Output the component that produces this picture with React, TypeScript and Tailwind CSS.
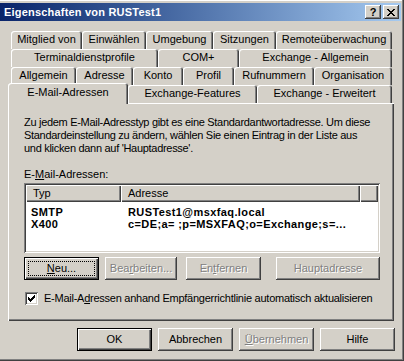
import React from "react";

const raised =
  "shadow-[inset_-1px_-1px_#404040,inset_1px_1px_#ffffff,inset_-2px_-2px_#808080,inset_2px_2px_#d4d0c8]";
const defBtn =
  "shadow-[inset_0_0_0_1px_#000000,inset_2px_2px_#ffffff,inset_-2px_-2px_#404040,inset_-3px_-3px_#808080]";
const disabledText = "text-[#808080] [text-shadow:1px_1px_0_#ffffff]";

function Tab({ label, w }: { label: string; w: string }) {
  return (
    <div
      className={`${w} h-[18px] shrink-0 flex items-center justify-center rounded-t-[3px] bg-[#d4d0c8] shadow-[inset_1px_1px_#ffffff,inset_-1px_0_#404040,inset_-2px_0_#808080] pb-[1px]`}
    >
      {label}
    </div>
  );
}

function Button({
  children,
  w,
  kind = "normal",
}: {
  children: React.ReactNode;
  w: string;
  kind?: "normal" | "default" | "focus" | "disabled";
}) {
  const sh = kind === "default" || kind === "focus" ? defBtn : raised;
  return (
    <div className={`${w} h-[23px] shrink-0 flex bg-[#d4d0c8] ${sh}`}>
      {kind === "focus" ? (
        <div className="flex-1 m-[4px] border border-dotted border-black flex items-center justify-center">
          {children}
        </div>
      ) : (
        <div
          className={`flex-1 flex items-center justify-center ${
            kind === "disabled" ? disabledText : ""
          }`}
        >
          {children}
        </div>
      )}
    </div>
  );
}

export default function App() {
  return (
    <div className="w-[404px] h-[361px] overflow-hidden whitespace-nowrap bg-[#d4d0c8] font-['Liberation_Sans',Arial,sans-serif] text-[11px] leading-[13px] text-black flex flex-col pt-[3px] pr-[3px] shadow-[inset_-1px_-1px_#404040,inset_-2px_-2px_#808080,inset_0_1px_#ffffff]">
      {/* Title bar */}
      <div className="h-[18px] shrink-0 flex items-center pl-[4px] pr-[2px] bg-gradient-to-r from-[#0a246a] to-[#a6caf0]">
        <div className="flex-1 text-white font-bold text-[11px] tracking-[0.2px]">
          Eigenschaften von RUSTest1
        </div>
        <div className={`w-[16px] h-[14px] flex items-center justify-center bg-[#d4d0c8] ${raised} font-bold text-[11px]`}>
          ?
        </div>
        <div className={`ml-[2px] w-[16px] h-[14px] flex items-center justify-center bg-[#d4d0c8] ${raised}`}>
          <svg width="8" height="7" viewBox="0 0 8 7" shapeRendering="crispEdges">
            <path
              d="M0 0h2v1H0zM6 0h2v1H6zM1 1h2v1H1zM5 1h2v1H5zM2 2h4v1H2zM3 3h2v1H3zM2 4h4v1H2zM1 5h2v1H1zM5 5h2v1H5zM0 6h2v1H0zM6 6h2v1H6z"
              fill="#000"
            />
          </svg>
        </div>
      </div>

      {/* Tabs */}
      <div className="mt-[10px] flex flex-col">
        <div className="ml-[11px] flex">
          <Tab label="Mitglied von" w="w-[71px]" />
          <Tab label="Einwählen" w="w-[64px]" />
          <Tab label="Umgebung" w="w-[67px]" />
          <Tab label="Sitzungen" w="w-[63px]" />
          <Tab label="Remoteüberwachung" w="w-[116px]" />
        </div>
        <div className="ml-[11px] flex">
          <Tab label="Terminaldienstprofile" w="w-[147px]" />
          <Tab label="COM+" w="w-[81px]" />
          <Tab label="Exchange - Allgemein" w="w-[153px]" />
        </div>
        <div className="ml-[11px] flex">
          <Tab label="Allgemein" w="w-[65px]" />
          <Tab label="Adresse" w="w-[57px]" />
          <Tab label="Konto" w="w-[50px]" />
          <Tab label="Profil" w="w-[51px]" />
          <Tab label="Rufnummern" w="w-[80px]" />
          <Tab label="Organisation" w="w-[78px]" />
        </div>
        <div className="ml-[8px] -mt-[2px] h-[20px] flex relative z-10">
          <div className="w-[120px] h-[21px] shrink-0 flex justify-center pt-[3px] rounded-t-[3px] bg-[#d4d0c8] shadow-[inset_1px_1px_#ffffff,inset_-1px_0_#404040,inset_-2px_0_#808080]">
            E-Mail-Adressen
          </div>
          <div className="mt-[2px] flex">
            <Tab label="Exchange-Features" w="w-[129px]" />
            <Tab label="Exchange - Erweitert" w="w-[135px]" />
          </div>
        </div>
      </div>

      {/* Panel */}
      <div className="ml-[8px] w-[386px] h-[218px] shrink-0 flex flex-col pl-[16px] pr-[14px] pt-[13px] shadow-[inset_1px_1px_#ffffff,inset_-1px_-1px_#404040,inset_-2px_-2px_#808080]">
        <p className="tracking-[-0.3px]">
          Zu jedem E-Mail-Adresstyp gibt es eine Standardantwortadresse. Um diese
          <br />
          Standardeinstellung zu ändern, wählen Sie einen Eintrag in der Liste aus
          <br />
          und klicken dann auf 'Hauptadresse'.
        </p>
        <div className="mt-[13px]">
          E-<span className="underline">M</span>ail-Adressen:
        </div>
        <div className="mt-[2px] w-[356px] h-[70px] bg-white p-[2px] flex flex-col shadow-[inset_1px_1px_#808080,inset_-1px_-1px_#ffffff,inset_2px_2px_#404040,inset_-2px_-2px_#d4d0c8]">
          <div className="h-[17px] flex shrink-0">
            <div className="w-[95px] flex items-center pl-[7px] bg-[#d4d0c8] shadow-[inset_1px_1px_#ffffff,inset_-1px_-1px_#404040,inset_-2px_-2px_#808080]">
              Typ
            </div>
            <div className="w-[239px] flex items-center pl-[7px] bg-[#d4d0c8] shadow-[inset_1px_1px_#ffffff,inset_-1px_-1px_#404040,inset_-2px_-2px_#808080]">
              Adresse
            </div>
            <div className="flex-1 bg-[#d4d0c8] shadow-[inset_1px_1px_#ffffff,inset_-1px_-1px_#404040,inset_-2px_-2px_#808080]" />
          </div>
          <div className="pt-[4px] font-bold tracking-[0.4px] flex flex-col">
            <div className="flex h-[12px] items-center">
              <div className="w-[95px] pl-[5px]">SMTP</div>
              <div className="pl-[7px]">RUSTest1@msxfaq.local</div>
            </div>
            <div className="flex h-[12px] items-center">
              <div className="w-[95px] pl-[5px]">X400</div>
              <div className="pl-[7px]">c=DE;a= ;p=MSXFAQ;o=Exchange;s=...</div>
            </div>
          </div>
        </div>
        <div className="mt-[4px] flex">
          <Button w="w-[75px]" kind="focus">
            <span>
              <span className="underline">N</span>eu...
            </span>
          </Button>
          <div className="ml-[6px]">
            <Button w="w-[72px]" kind="disabled">
              <span>
                Bea<span className="underline">r</span>beiten...
              </span>
            </Button>
          </div>
          <div className="ml-[9px]">
            <Button w="w-[75px]" kind="disabled">
              <span>
                En<span className="underline">t</span>fernen
              </span>
            </Button>
          </div>
          <div className="ml-[15px]">
            <Button w="w-[104px]" kind="disabled">
              Hauptadresse
            </Button>
          </div>
        </div>
        <div className="mt-[12px] flex items-center h-[13px]">
          <div className="w-[13px] h-[13px] ml-[1px] shrink-0 bg-white flex items-center justify-center shadow-[inset_1px_1px_#808080,inset_-1px_-1px_#ffffff,inset_2px_2px_#404040,inset_-2px_-2px_#d4d0c8]">
            <svg width="7" height="7" viewBox="0 0 7 7" shapeRendering="crispEdges">
              <path d="M6 0h1v1H6zM5 1h1v3H5zM6 1h1v2H6zM4 2h1v3H4zM3 3h1v3H3zM2 4h1v3H2zM1 3h1v3H1zM0 2h1v3H0z" fill="#000" />
            </svg>
          </div>
          <div className="ml-[6px] tracking-[-0.25px]">
            E-Mail-A<span className="underline">d</span>ressen anhand Empfängerrichtlinie automatisch aktualisieren
          </div>
        </div>
      </div>

      {/* Bottom buttons */}
      <div className="mt-[7px] ml-[77px] flex gap-[6px]">
        <Button w="w-[75px]" kind="default">
          OK
        </Button>
        <Button w="w-[75px]">Abbrechen</Button>
        <Button w="w-[75px]" kind="disabled">
          <span>
            <span className="underline">Ü</span>bernehmen
          </span>
        </Button>
        <Button w="w-[75px]">Hilfe</Button>
      </div>
    </div>
  );
}
